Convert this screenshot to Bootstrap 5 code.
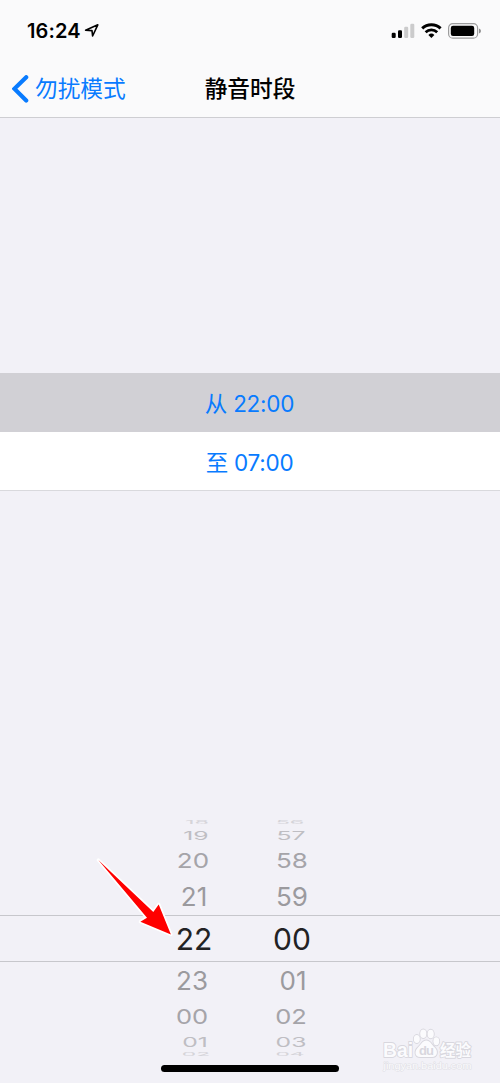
<!DOCTYPE html>
<html lang="zh-CN">
<head>
<meta charset="utf-8">
<meta name="viewport" content="width=device-width, initial-scale=1">
<title>静音时段</title>
<link rel="stylesheet" href="https://cdn.jsdelivr.net/npm/bootstrap@5.3.0/dist/css/bootstrap.min.css">
<style>
  body { background:#f2f1f7; font-family:Inter,"Noto Sans CJK SC",sans-serif; color:#000; }
  .phone { width:500px; height:1083px; }
  .top-area { height:118px; background:#fafafb; border-bottom:1px solid #ceced2; }
  .status { height:60px; padding:1px 19px 0 27px; }
  .clock { font-size:20px; font-weight:600; line-height:60px; letter-spacing:.1px; }
  .titlebar { display:grid; grid-template-columns:1fr auto 1fr; height:57px; padding:0 12px; font-size:22.7px; line-height:57px; }
  .ios-blue { color:#087bff; }
  .heading { font-weight:500; }
  .back-label { margin-left:6px; line-height:55px; }
  .times { margin-top:255px; }
  .time-row { height:59px; line-height:61px; font-size:22.5px; letter-spacing:-.25px; border:0; border-radius:0; padding:0 1px 0 0; background:#fff; }
  .time-row.chosen { background:#d1d0d5; }
  .list-group-flush > .time-row.final { border-bottom:1px solid #d9d9dd; }
  .wheel { margin-top:326px; }
  .wheel-row { display:grid; grid-template-columns:146px 98px 98px; height:var(--h); line-height:var(--h); color:var(--c); font-size:26px; white-space:nowrap; }
  .wheel-row > span { grid-column:2; display:flex; justify-content:center; align-items:center; height:var(--h); transform:translateX(var(--dx)) scale(var(--sx),var(--sy)); }
  .wheel-row > span + span { grid-column:3; }
  .wheel-row.current { border-top:1px solid #c7c7cc; border-bottom:1px solid #c7c7cc; font-size:30px; line-height:46px; }
  .wheel-row.current > span { height:46px; }
  .home-bar { left:161px; top:1065px; width:178px; height:7px; background:#000; }
  .pointer { left:90px; top:850px; }
  .watermark { left:378px; top:1024px; }
</style>
</head>
<body>
<main class="phone position-relative overflow-hidden">
  <header class="top-area">
    <div class="status d-flex align-items-center justify-content-between">
      <div class="d-flex align-items-center">
        <span class="clock">16:24</span>
        <svg width="15" height="15" viewBox="0 0 15 15" style="margin-left:3px"><path d="M1.6 7.2 13.8 1.8 8.6 13 8 7.6Z" fill="none" stroke="#000" stroke-width="1.6" stroke-linejoin="round"/></svg>
      </div>
      <svg width="90" height="18" viewBox="0 0 90 18">
        <rect x=".7" y="10.8" width="4" height="5.2" rx="1.2"/>
        <rect x="7" y="8.2" width="4" height="7.8" rx="1.2"/>
        <rect x="13.2" y="4.8" width="4" height="11.2" rx="1.2" fill="#cbcbcc"/>
        <rect x="19.3" y="1.8" width="4" height="14.2" rx="1.2" fill="#cbcbcc"/>
        <g fill="none" stroke="#000"><path d="M31.2 6.4a13.4 13.4 0 0 1 18.4 0" stroke-width="3"/><path d="M34.6 10.2a8.5 8.5 0 0 1 11.6 0" stroke-width="2.8"/></g>
        <path d="M37.4 12.9a4.3 4.3 0 0 1 6 0L40.4 16Z"/>
        <rect x="57.6" y="1.7" width="29" height="14.4" rx="4.2" fill="none" stroke="#9c9c9d" stroke-width="1.2"/>
        <rect x="59.8" y="3.8" width="23.4" height="10.2" rx="2.2"/>
        <path d="M88 6.4q2 .9 2 2.5t-2 2.5z" fill="#8f8f90"/>
      </svg>
    </div>
    <nav class="titlebar">
      <a class="ios-blue text-decoration-none d-flex align-items-center" href="#">
        <svg width="17" height="28" viewBox="0 0 17 28"><path d="M14.2 2.2 2.4 13.8 14.2 25.6" fill="none" stroke="#087bff" stroke-width="4.2" stroke-linecap="round" stroke-linejoin="miter"/></svg>
        <span class="back-label">勿扰模式</span>
      </a>
      <span class="heading">静音时段</span>
    </nav>
  </header>

  <div class="times list-group list-group-flush text-center">
    <div class="list-group-item time-row chosen ios-blue">从 22:00</div>
    <div class="list-group-item time-row final ios-blue">至 07:00</div>
  </div>

  <section class="wheel">
    <div class="wheel-row" style="--h:11px;--c:#d5d4d9;--sx:.9;--sy:.2"><span style="--dx:2px">18</span><span style="--dx:-3px">56</span></div>
    <div class="wheel-row" style="--h:15px;--c:#bfbec3;--sx:.95;--sy:.47"><span style="--dx:1px">19</span><span style="--dx:-2px">57</span></div>
    <div class="wheel-row" style="--h:36px;--c:#a5a4a9;--sx:1;--sy:.79"><span style="--dx:-2px">20</span><span style="--dx:-1px">58</span></div>
    <div class="wheel-row" style="--h:36px;--c:#9b9a9e;--sx:1;--sy:1"><span style="--dx:-1px">21</span><span style="--dx:-1px">59</span></div>
    <div class="wheel-row current" style="--h:47px;--c:#222224;--sx:1;--sy:1"><span style="--dx:-1px">22</span><span style="--dx:-1px">00</span></div>
    <div class="wheel-row" style="--h:37px;--c:#9b9a9e;--sx:1;--sy:1"><span style="--dx:-3px">23</span><span style="--dx:0px">01</span></div>
    <div class="wheel-row" style="--h:35px;--c:#a5a4a9;--sx:.98;--sy:.79"><span style="--dx:-3px">00</span><span style="--dx:-2px">02</span></div>
    <div class="wheel-row" style="--h:16px;--c:#bfbec3;--sx:.95;--sy:.5"><span style="--dx:0px">01</span><span style="--dx:-2px">03</span></div>
    <div class="wheel-row" style="--h:9px;--c:#d5d4d9;--sx:.88;--sy:.2"><span style="--dx:1px">02</span><span style="--dx:-3px">04</span></div>
  </section>

  <svg class="pointer position-absolute" width="90" height="94" viewBox="90 850 90 94">
    <path d="M98.3 860 153.3 912 158.7 904.4 170.9 934.5 140.4 921.8 147 917.8Z" fill="#f00" stroke="#fff" stroke-width="3.4" stroke-linejoin="round" paint-order="stroke"/>
  </svg>
  <svg class="watermark position-absolute" width="100" height="52" viewBox="378 1024 100 52">
    <g fill="#fbfbfd" stroke="#d8d7de" stroke-width="1.8" paint-order="stroke" stroke-linejoin="round">
      <ellipse cx="416.8" cy="1039" rx="3" ry="4"/><ellipse cx="423.3" cy="1033.7" rx="3.1" ry="4.3"/>
      <ellipse cx="430.7" cy="1034" rx="3.1" ry="4.3"/><ellipse cx="436.3" cy="1041.3" rx="2.9" ry="4"/>
      <path d="M426.3 1040.5c4 0 5 4 8.2 6.7 4 3.7 3 9.8-2.4 9.8h-12c-5.3 0-6-6-2.1-9.6 3.3-2.9 4.4-6.9 8.3-6.9z"/>
      <text x="383" y="1056.5" font-family="Liberation Sans" font-size="20" font-weight="700" textLength="30" lengthAdjust="spacingAndGlyphs">Bai</text>
      <text x="440" y="1055.5" font-family="Noto Sans CJK SC" font-size="15.5" font-weight="700" textLength="31">经验</text>
      <text x="383.5" y="1068.5" font-family="Liberation Sans" font-size="9.6" stroke-width="1" stroke="#e0dfe5" textLength="88" lengthAdjust="spacingAndGlyphs">jingyan.baidu.com</text>
    </g>
    <text x="419" y="1055" font-family="Liberation Sans" font-size="13" font-weight="700" fill="#d8d7de" textLength="15">du</text>
  </svg>
  <div class="home-bar position-absolute rounded-pill"></div>
</main>
<script src="https://cdn.jsdelivr.net/npm/bootstrap@5.3.0/dist/js/bootstrap.bundle.min.js"></script>
</body>
</html>
